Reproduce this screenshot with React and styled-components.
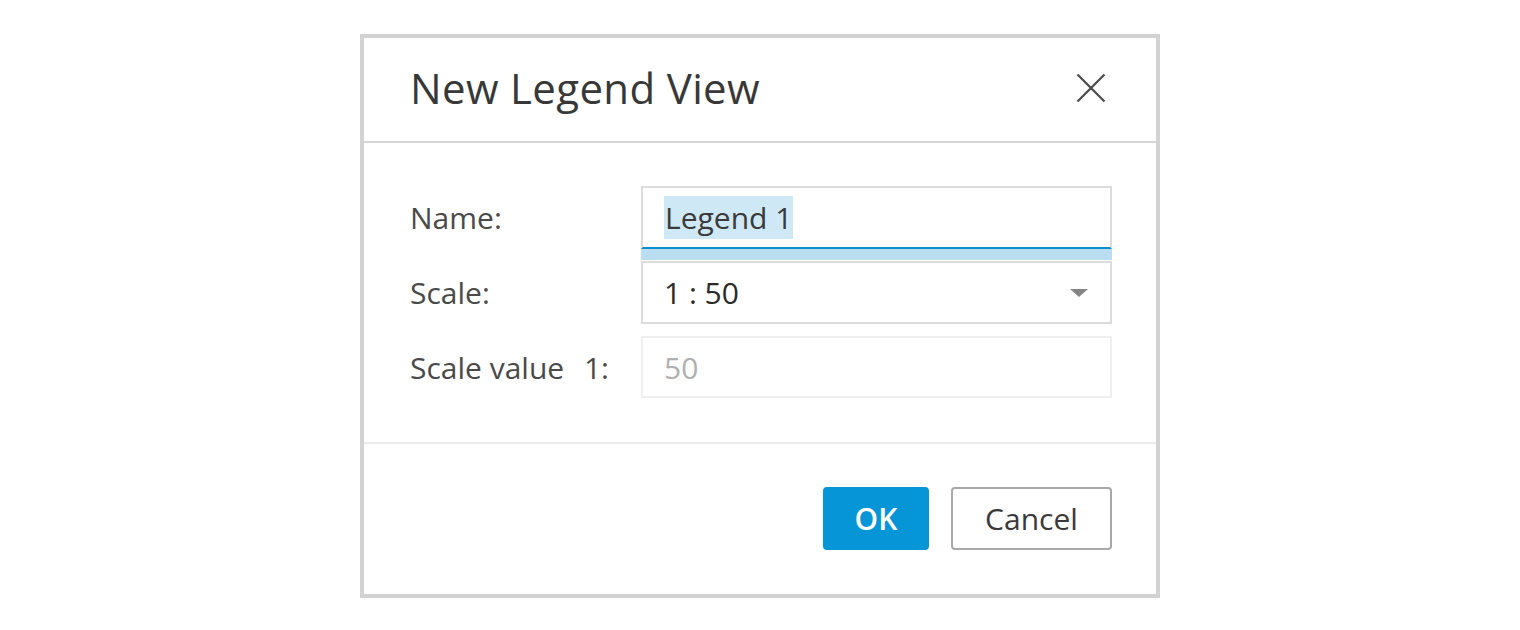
import React from "react";
import styled, { createGlobalStyle } from "styled-components";

const Global = createGlobalStyle`
  html, body { margin: 0; padding: 0; background: #ffffff; }
  body { font-family: "Open Sans", "Noto Sans", sans-serif; }
`;

const Page = styled.div`
  width: 1520px;
  height: 630px;
  display: flex;
  justify-content: center;
  align-items: flex-start;
  padding-top: 34px;
  box-sizing: border-box;
`;

const Dialog = styled.div`
  width: 800px;
  height: 564px;
  box-sizing: border-box;
  border: 4px solid #d2d2d2;
  background: #fff;
  display: flex;
  flex-direction: column;
`;

const Header = styled.div`
  height: 105px;
  box-sizing: border-box;
  border-bottom: 2px solid #d6d6d6;
  display: flex;
  align-items: center;
  justify-content: space-between;
  padding: 0 50px 4px 46px;
`;

const Title = styled.h1`
  margin: 0;
  font-size: 42px;
  font-weight: 500;
  color: #383838;
  letter-spacing: 0.35px;
`;

const CloseButton = styled.button`
  border: 0;
  background: none;
  padding: 0;
  width: 30px;
  height: 30px;
  display: flex;
  align-items: center;
  justify-content: center;
  cursor: pointer;
`;

const Body = styled.div`
  padding: 43px 44px 44px 46px;
  border-bottom: 2px solid #ececec;
  display: grid;
  grid-template-columns: 231px 471px;
  row-gap: 12px;
  align-items: center;
`;

const Label = styled.label`
  font-size: 30px;
  color: #4a4a4a;
  white-space: pre;
`;

const LabelSuffix = styled.span`
  margin-left: 12px;
`;

const Field = styled.div`
  height: ${(p) => p.$h || 63}px;
  box-sizing: border-box;
  border: 2px solid ${(p) => (p.$disabled ? "#efefef" : "#dcdcdc")};
  display: flex;
  align-items: center;
  justify-content: space-between;
  padding: 0 22px 0 21px;
  font-size: 30px;
  font-weight: ${(p) => (p.$disabled ? 400 : 500)};
  color: ${(p) => (p.$disabled ? "#b0b0b0" : "#2a2a2a")};
  position: relative;
`;

const FocusedField = styled(Field)`
  border-bottom: 2px solid #0a8fce;
  &::after {
    content: "";
    position: absolute;
    left: -2px;
    right: -2px;
    top: calc(100% + 2px);
    height: 11px;
    background: #b9def2;
  }
`;

const Selected = styled.span`
  background: #cfe8f6;
  color: #3a3a3a;
  padding: 1px 1px;
  line-height: 41px;
`;

const Caret = styled.span`
  width: 0;
  height: 0;
  border-left: 9px solid transparent;
  border-right: 9px solid transparent;
  border-top: 8px solid #858585;
`;

const Footer = styled.div`
  flex: 1;
  display: flex;
  justify-content: flex-end;
  align-items: flex-start;
  gap: 22px;
  padding: 43px 44px 0 0;
`;

const Button = styled.button`
  height: 63px;
  box-sizing: border-box;
  border-radius: 4px;
  font-family: "Open Sans", "Noto Sans", sans-serif;
  font-size: 30px;
  padding: 0;
  width: ${(p) => p.$w}px;
  cursor: pointer;
  ${(p) =>
    p.$primary
      ? `background: #0696d7; border: 2px solid #0696d7; color: #fff; font-weight: 600;`
      : `background: #fff; border: 2px solid #a8a8a8; color: #3a3a3a; font-weight: 400;`}
`;

export default function App() {
  return (
    <>
      <Global />
      <Page>
        <Dialog>
          <Header>
            <Title>New Legend View</Title>
            <CloseButton aria-label="Close">
              <svg width="30" height="30" viewBox="0 0 30 30">
                <path d="M1.5 1.5 L28.5 28.5 M28.5 1.5 L1.5 28.5" stroke="#4a4a4a" strokeWidth="2.2" fill="none" />
              </svg>
            </CloseButton>
          </Header>
          <Body>
            <Label>Name:</Label>
            <FocusedField>
              <Selected>Legend 1</Selected>
            </FocusedField>
            <Label>Scale:</Label>
            <Field>
              <span>1 : 50</span>
              <Caret />
            </Field>
            <Label>
              Scale value <LabelSuffix>1:</LabelSuffix>
            </Label>
            <Field $disabled $h={62}>
              <span>50</span>
            </Field>
          </Body>
          <Footer>
            <Button $primary $w={106}>OK</Button>
            <Button $w={161}>Cancel</Button>
          </Footer>
        </Dialog>
      </Page>
    </>
  );
}
